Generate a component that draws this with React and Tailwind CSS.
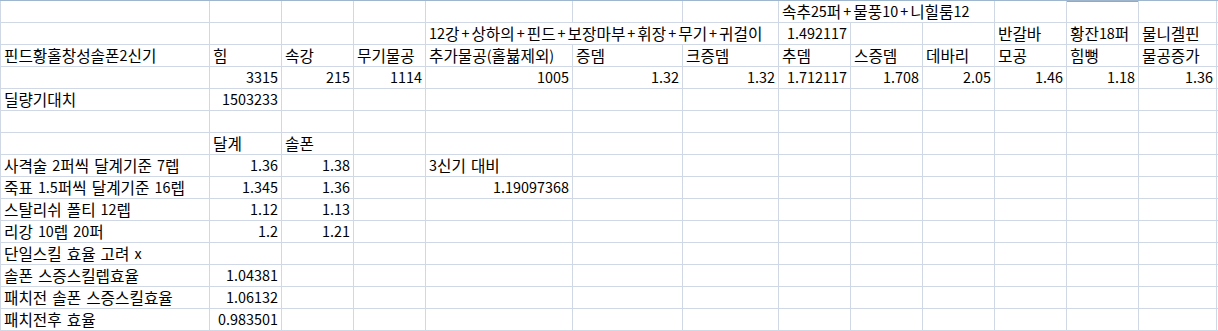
import React from 'react';

// column letters A..N, widths come from the grid template below
const COLS = 14;

const rows = [
  { 7: { t: '속추25퍼+물풍10+니힐룸12', span: 3 } },
  { 4: { t: '12강+상하의+핀드+보장마부+휘장+무기+귀걸이', span: 3 }, 7: { t: '1.492117', r: true }, 10: { t: '반갈바' }, 11: { t: '황잔18퍼' }, 12: { t: '물니겔핀' } },
  {
    0: { t: '핀드황홀창성솔폰2신기' }, 1: { t: '힘' }, 2: { t: '속강' }, 3: { t: '무기물공' }, 4: { t: '추가물공(홀뷻제외)' },
    5: { t: '증뎀' }, 6: { t: '크증뎀' }, 7: { t: '추뎀' }, 8: { t: '스증뎀' }, 9: { t: '데바리' }, 10: { t: '모공' },
    11: { t: '힘뻥' }, 12: { t: '물공증가' },
  },
  {
    1: { t: '3315', r: true }, 2: { t: '215', r: true }, 3: { t: '1114', r: true }, 4: { t: '1005', r: true },
    5: { t: '1.32', r: true }, 6: { t: '1.32', r: true }, 7: { t: '1.712117', r: true }, 8: { t: '1.708', r: true },
    9: { t: '2.05', r: true }, 10: { t: '1.46', r: true }, 11: { t: '1.18', r: true }, 12: { t: '1.36', r: true },
  },
  { 0: { t: '딜량기대치' }, 1: { t: '1503233', r: true } },
  {},
  { 1: { t: '달계' }, 2: { t: '솔폰' } },
  { 0: { t: '사격술 2퍼씩 달계기준 7렙' }, 1: { t: '1.36', r: true }, 2: { t: '1.38', r: true }, 4: { t: '3신기 대비' } },
  { 0: { t: '죽표 1.5퍼씩 달계기준 16렙' }, 1: { t: '1.345', r: true }, 2: { t: '1.36', r: true }, 4: { t: '1.19097368', r: true } },
  { 0: { t: '스탈리쉬 폴티 12렙' }, 1: { t: '1.12', r: true }, 2: { t: '1.13', r: true } },
  { 0: { t: '리강 10렙 20퍼' }, 1: { t: '1.2', r: true }, 2: { t: '1.21', r: true } },
  { 0: { t: '단일스킬 효율 고려 x' } },
  { 0: { t: '솔폰 스증스킬렙효율' }, 1: { t: '1.04381', r: true } },
  { 0: { t: '패치전 솔폰 스증스킬효율' }, 1: { t: '1.06132', r: true } },
  { 0: { t: '패치전후 효율' }, 1: { t: '0.983501', r: true } },
];

// Excel's Malgun Gothic has wider hangul, spaces and plus signs than Noto, so widen those runs
const Text = ({ t }) => {
  const parts = t.split(/([가-힣]+|\+| )/).filter(Boolean);
  return parts.map((p, i) => {
    if (/[가-힣]/.test(p)) return <span key={i} className="text-[15.7px]">{p}</span>;
    if (p === '+') return <span key={i} className="mx-[2px]">+</span>;
    if (p === ' ') return <span key={i} className="inline-block w-[5px]" />;
    return <span key={i}>{p}</span>;
  });
};

const Cell = ({ cell, topRow, col }) => {
  const span = cell?.span === 3 ? 'col-span-3' : '';
  const align = cell?.r ? 'justify-end pr-[3px]' : 'justify-start pl-[3px]';
  // selected column L shows the orange header edge at the very top
  const orange = topRow && col === 11 ? 'shadow-[inset_0_1px_0_#f29436]' : '';
  return (
    <div className={`h-[21px] bg-white flex items-center overflow-visible whitespace-nowrap ${span} ${align} ${orange}`}>
      {cell?.t && <Text t={cell.t} />}
    </div>
  );
};

const App = () => {
  return (
    <div className="w-[1218px] h-[331px] overflow-hidden bg-white">
      <div
        className="grid grid-cols-[208px_71px_71px_71px_146px_109px_95px_71px_71px_71px_71px_71px_77px_100px] gap-px bg-[#d0d7e5] pl-px pb-px border-t border-[#9eb6ce] w-max text-[14.4px] leading-none text-black"
        style={{ fontFamily: '"Noto Sans CJK KR", "Noto Sans", sans-serif' }}
      >
        {rows.map((row, ri) => {
          const cells = [];
          for (let c = 0; c < COLS; c++) {
            const cell = row[c];
            cells.push(<Cell key={`${ri}-${c}`} cell={cell} topRow={ri === 0} col={c} />);
            if (cell?.span === 3) c += 2;
          }
          return cells;
        })}
      </div>
    </div>
  );
};

export default App;
